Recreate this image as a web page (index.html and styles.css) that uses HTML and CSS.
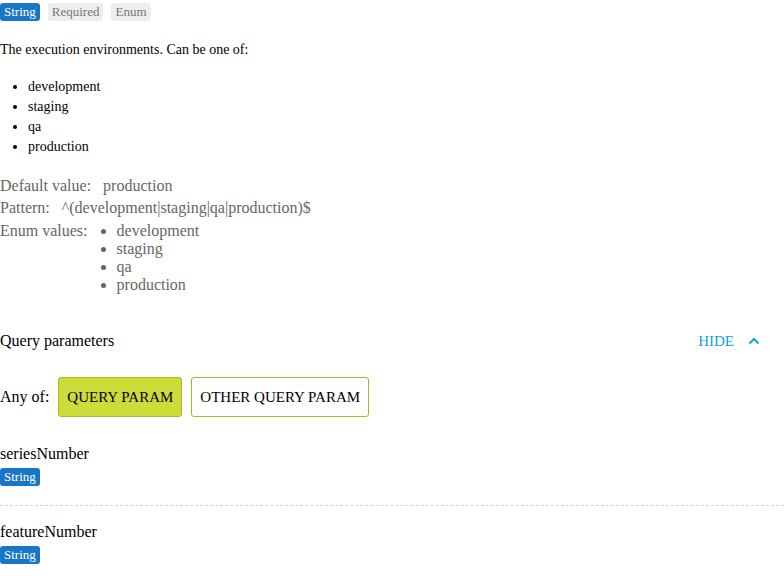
FILE: index.html
```html
<!DOCTYPE html>
<html>
<head>
<meta charset="utf-8">
<link rel="stylesheet" href="styles.css">
</head>
<body>
<div class="page">
  <div class="badges">
    <span class="badge badge-type">String</span>
    <span class="badge badge-meta">Required</span>
    <span class="badge badge-meta">Enum</span>
  </div>
  <p class="desc">The execution environments. Can be one of:</p>
  <ul class="desc-list">
    <li>development</li>
    <li>staging</li>
    <li>qa</li>
    <li>production</li>
  </ul>
  <div class="meta">
    <div class="meta-row"><span class="meta-label">Default value:</span><span class="meta-value">production</span></div>
    <div class="meta-row"><span class="meta-label">Pattern:</span><span class="meta-value">^(development|staging|qa|production)$</span></div>
    <div class="meta-row enum-row"><span class="meta-label">Enum values:</span>
      <ul class="enum-list">
        <li>development</li>
        <li>staging</li>
        <li>qa</li>
        <li>production</li>
      </ul>
    </div>
  </div>
  <div class="section-head">
    <span class="section-title">Query parameters</span>
    <span class="toggle">HIDE
      <svg class="chev" width="12" height="8" viewBox="0 0 12 8"><path d="M1.5 6.5 L6 2 L10.5 6.5" fill="none" stroke="#0ea5dc" stroke-width="2"/></svg>
    </span>
  </div>
  <div class="anyof">
    <span class="anyof-label">Any of:</span>
    <button class="opt opt-active">QUERY PARAM</button>
    <button class="opt">OTHER QUERY PARAM</button>
  </div>
  <div class="param">
    <div class="param-name">seriesNumber</div>
    <span class="badge badge-type">String</span>
  </div>
  <div class="param param-last">
    <div class="param-name">featureNumber</div>
    <span class="badge badge-type">String</span>
  </div>
</div>
</body>
</html>
```

FILE: styles.css
```css
html, body {
  margin: 0;
  padding: 0;
  background: #fff;
}
.page {
  font-family: "Liberation Serif", "Times New Roman", serif;
  color: #000;
  width: 784px;
}
.badges {
  display: flex;
  gap: 8px;
  padding-top: 3px;
}
.badge {
  display: inline-block;
  font-size: 13px;
  line-height: 18px;
  height: 18px;
  padding: 0 4px;
  border-radius: 3px;
}
.badge-type {
  background: #1976c6;
  color: #fff;
}
.badge-meta {
  background: #eeeeee;
  color: #777;
}
.desc {
  margin: 19px 0 0;
  font-size: 14px;
  line-height: 20px;
}
.desc-list {
  margin: 17px 0 0;
  padding-left: 28px;
  font-size: 14px;
  line-height: 20px;
}
.meta {
  margin-top: 18px;
  color: #666;
  font-size: 16px;
}
.meta-row {
  display: flex;
  line-height: 22px;
}
.meta-label {
  margin-right: 12px;
}
.enum-row {
  line-height: 18px;
  margin-top: 3px;
}
.enum-list {
  margin: 0;
  padding-left: 17px;
}
.enum-list li {
  line-height: 18px;
}
.section-head {
  display: flex;
  justify-content: space-between;
  align-items: center;
  margin-top: 35px;
  height: 24px;
  font-size: 16px;
}
.toggle {
  display: flex;
  align-items: center;
  color: #0ea5dc;
  font-size: 15px;
  margin-right: 24px;
  gap: 14px;
}
.anyof {
  display: flex;
  align-items: center;
  margin-top: 24px;
  gap: 9px;
}
.anyof-label {
  font-size: 16px;
}
.opt {
  font-family: "Liberation Serif", "Times New Roman", serif;
  font-size: 15px;
  height: 40px;
  padding: 0 8px;
  background: #fff;
  border: 1px solid #a9b828;
  border-radius: 3px;
  color: #000;
}
.opt-active {
  background: #cddc39;
}
.param {
  padding-top: 27px;
  padding-bottom: 19px;
  border-bottom: 1px dashed #ccd8d8;
}
.param-last {
  padding-top: 16px;
  border-bottom: none;
}
.param-name {
  font-size: 16px;
  line-height: 20px;
  margin-bottom: 3px;
}
```
